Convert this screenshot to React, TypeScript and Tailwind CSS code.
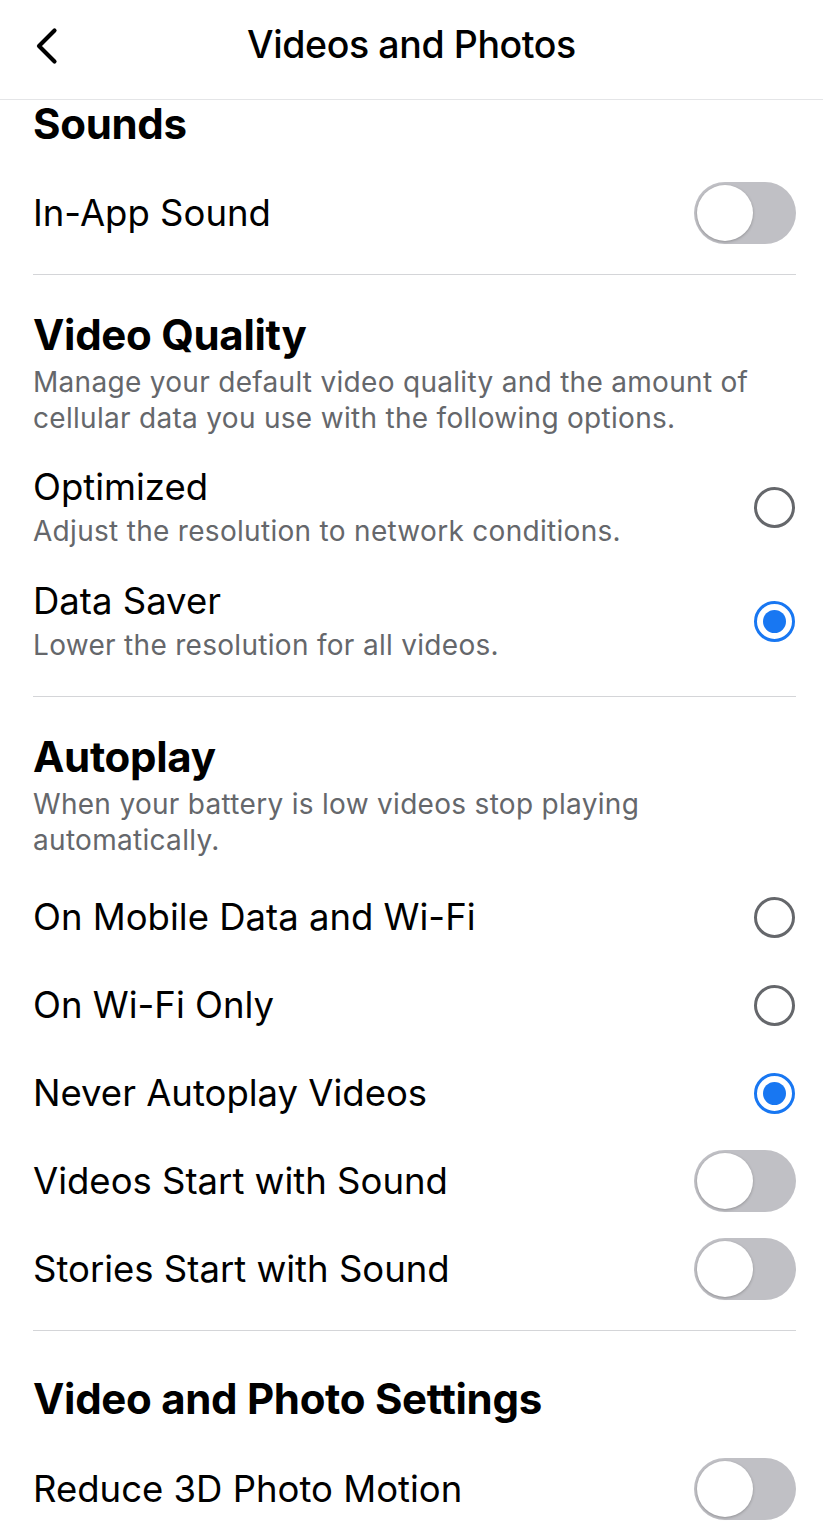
import React, { useState } from 'react';

const Toggle: React.FC<{ on: boolean; onChange: () => void }> = ({ on, onChange }) => (
  <button
    onClick={onChange}
    className={`flex h-[62px] w-[102px] shrink-0 items-center rounded-full p-[3px] ${on ? 'justify-end bg-[#1877f2]' : 'justify-start bg-[#c0c0c5]'}`}
  >
    <span className="h-[56px] w-[56px] rounded-full bg-white shadow-[0_1px_3px_rgba(0,0,0,0.25)]" />
  </button>
);

const Radio: React.FC<{ checked: boolean }> = ({ checked }) => (
  <span
    className={`flex h-[41px] w-[41px] shrink-0 items-center justify-center rounded-full border-[3px] ${checked ? 'border-[#1877f2]' : 'border-[#65676b]'}`}
  >
    {checked && <span className="h-[23px] w-[23px] rounded-full bg-[#1877f2]" />}
  </span>
);

const Divider = () => <div className="ml-[33px] mr-[27px] h-px bg-[#d4d5d8]" />;

const App: React.FC = () => {
  const [toggles, setToggles] = useState<Record<string, boolean>>({});
  const [quality, setQuality] = useState('saver');
  const [autoplay, setAutoplay] = useState('never');

  const flip = (k: string) => setToggles(t => ({ ...t, [k]: !t[k] }));

  const ToggleRow = ({ id, label }: { id: string; label: string }) => (
    <div className="flex h-[88px] items-center justify-between">
      <span className="text-[36.5px] leading-[44px] text-black">{label}</span>
      <Toggle on={!!toggles[id]} onChange={() => flip(id)} />
    </div>
  );

  const autoplayOptions = [
    { id: 'both', label: 'On Mobile Data and Wi-Fi' },
    { id: 'wifi', label: 'On Wi-Fi Only' },
    { id: 'never', label: 'Never Autoplay Videos' },
  ];

  return (
    <div className="h-[1522px] overflow-hidden bg-white font-['Inter',sans-serif] text-black">
      {/* header */}
      <div className="relative flex h-[100px] items-center justify-center border-b border-[#e4e5e7] pb-[8px]">
        <button className="absolute left-[31px] top-[23px] p-1">
          <svg width="26" height="38" viewBox="0 0 26 38" fill="none">
            <path d="M19.5 3.5 L4 19 L19.5 34.5" stroke="black" strokeWidth="4.2" strokeLinecap="round" strokeLinejoin="round" />
          </svg>
        </button>
        <h1 className="text-[37.5px] font-medium tracking-[-0.4px]">Videos and Photos</h1>
      </div>

      {/* Sounds */}
      <div className="pl-[33px] pr-[27px]">
        <h2 className="text-[42px] font-bold leading-[48px] tracking-[-0.3px]">Sounds</h2>
        <div className="mt-[21px]">
          <ToggleRow id="inapp" label="In-App Sound" />
        </div>
      </div>
      <div className="mt-[17px]">
        <Divider />
      </div>

      {/* Video Quality */}
      <div className="pl-[33px] pr-[28px] pt-[36px]">
        <h2 className="text-[42px] font-bold leading-[48px] tracking-[-0.3px]">Video Quality</h2>
        <p className="mt-[5px] text-[28px] leading-[36px] tracking-[0.3px] text-[#65676b]">
          Manage your default video quality and the amount of cellular data you use with the following options.
        </p>
        <div className="mt-[29px] flex flex-col gap-[30px]">
          {[
            { id: 'opt', title: 'Optimized', sub: 'Adjust the resolution to network conditions.' },
            { id: 'saver', title: 'Data Saver', sub: 'Lower the resolution for all videos.' },
          ].map(o => (
            <div key={o.id} onClick={() => setQuality(o.id)} className="flex cursor-pointer items-center justify-between">
              <div className="flex flex-col gap-[4px]">
                <span className="text-[36.5px] leading-[44px]">{o.title}</span>
                <span className="text-[28px] leading-[36px] tracking-[0.3px] text-[#65676b]">{o.sub}</span>
              </div>
              <Radio checked={quality === o.id} />
            </div>
          ))}
        </div>
      </div>
      <div className="mt-[33px]">
        <Divider />
      </div>

      {/* Autoplay */}
      <div className="pl-[33px] pr-[27px] pt-[36px]">
        <h2 className="text-[42px] font-bold leading-[48px] tracking-[-0.3px]">Autoplay</h2>
        <p className="mt-[5px] text-[28px] leading-[36px] tracking-[0.3px] text-[#65676b]">
          When your battery is low videos stop playing automatically.
        </p>
        <div className="mt-[15px]">
          {autoplayOptions.map(o => (
            <div
              key={o.id}
              onClick={() => setAutoplay(o.id)}
              className="flex h-[88px] cursor-pointer items-center justify-between pr-px"
            >
              <span className="text-[36.5px] leading-[44px]">{o.label}</span>
              <Radio checked={autoplay === o.id} />
            </div>
          ))}
          <ToggleRow id="videos" label="Videos Start with Sound" />
          <ToggleRow id="stories" label="Stories Start with Sound" />
        </div>
      </div>
      <div className="mt-[17px]">
        <Divider />
      </div>

      {/* Video and Photo Settings */}
      <div className="pl-[33px] pr-[27px] pt-[44px]">
        <h2 className="text-[42px] font-bold leading-[48px] tracking-[-0.3px]">Video and Photo Settings</h2>
        <div className="mt-[22px]">
          <ToggleRow id="reduce3d" label="Reduce 3D Photo Motion" />
        </div>
      </div>
    </div>
  );
};

export default App;
